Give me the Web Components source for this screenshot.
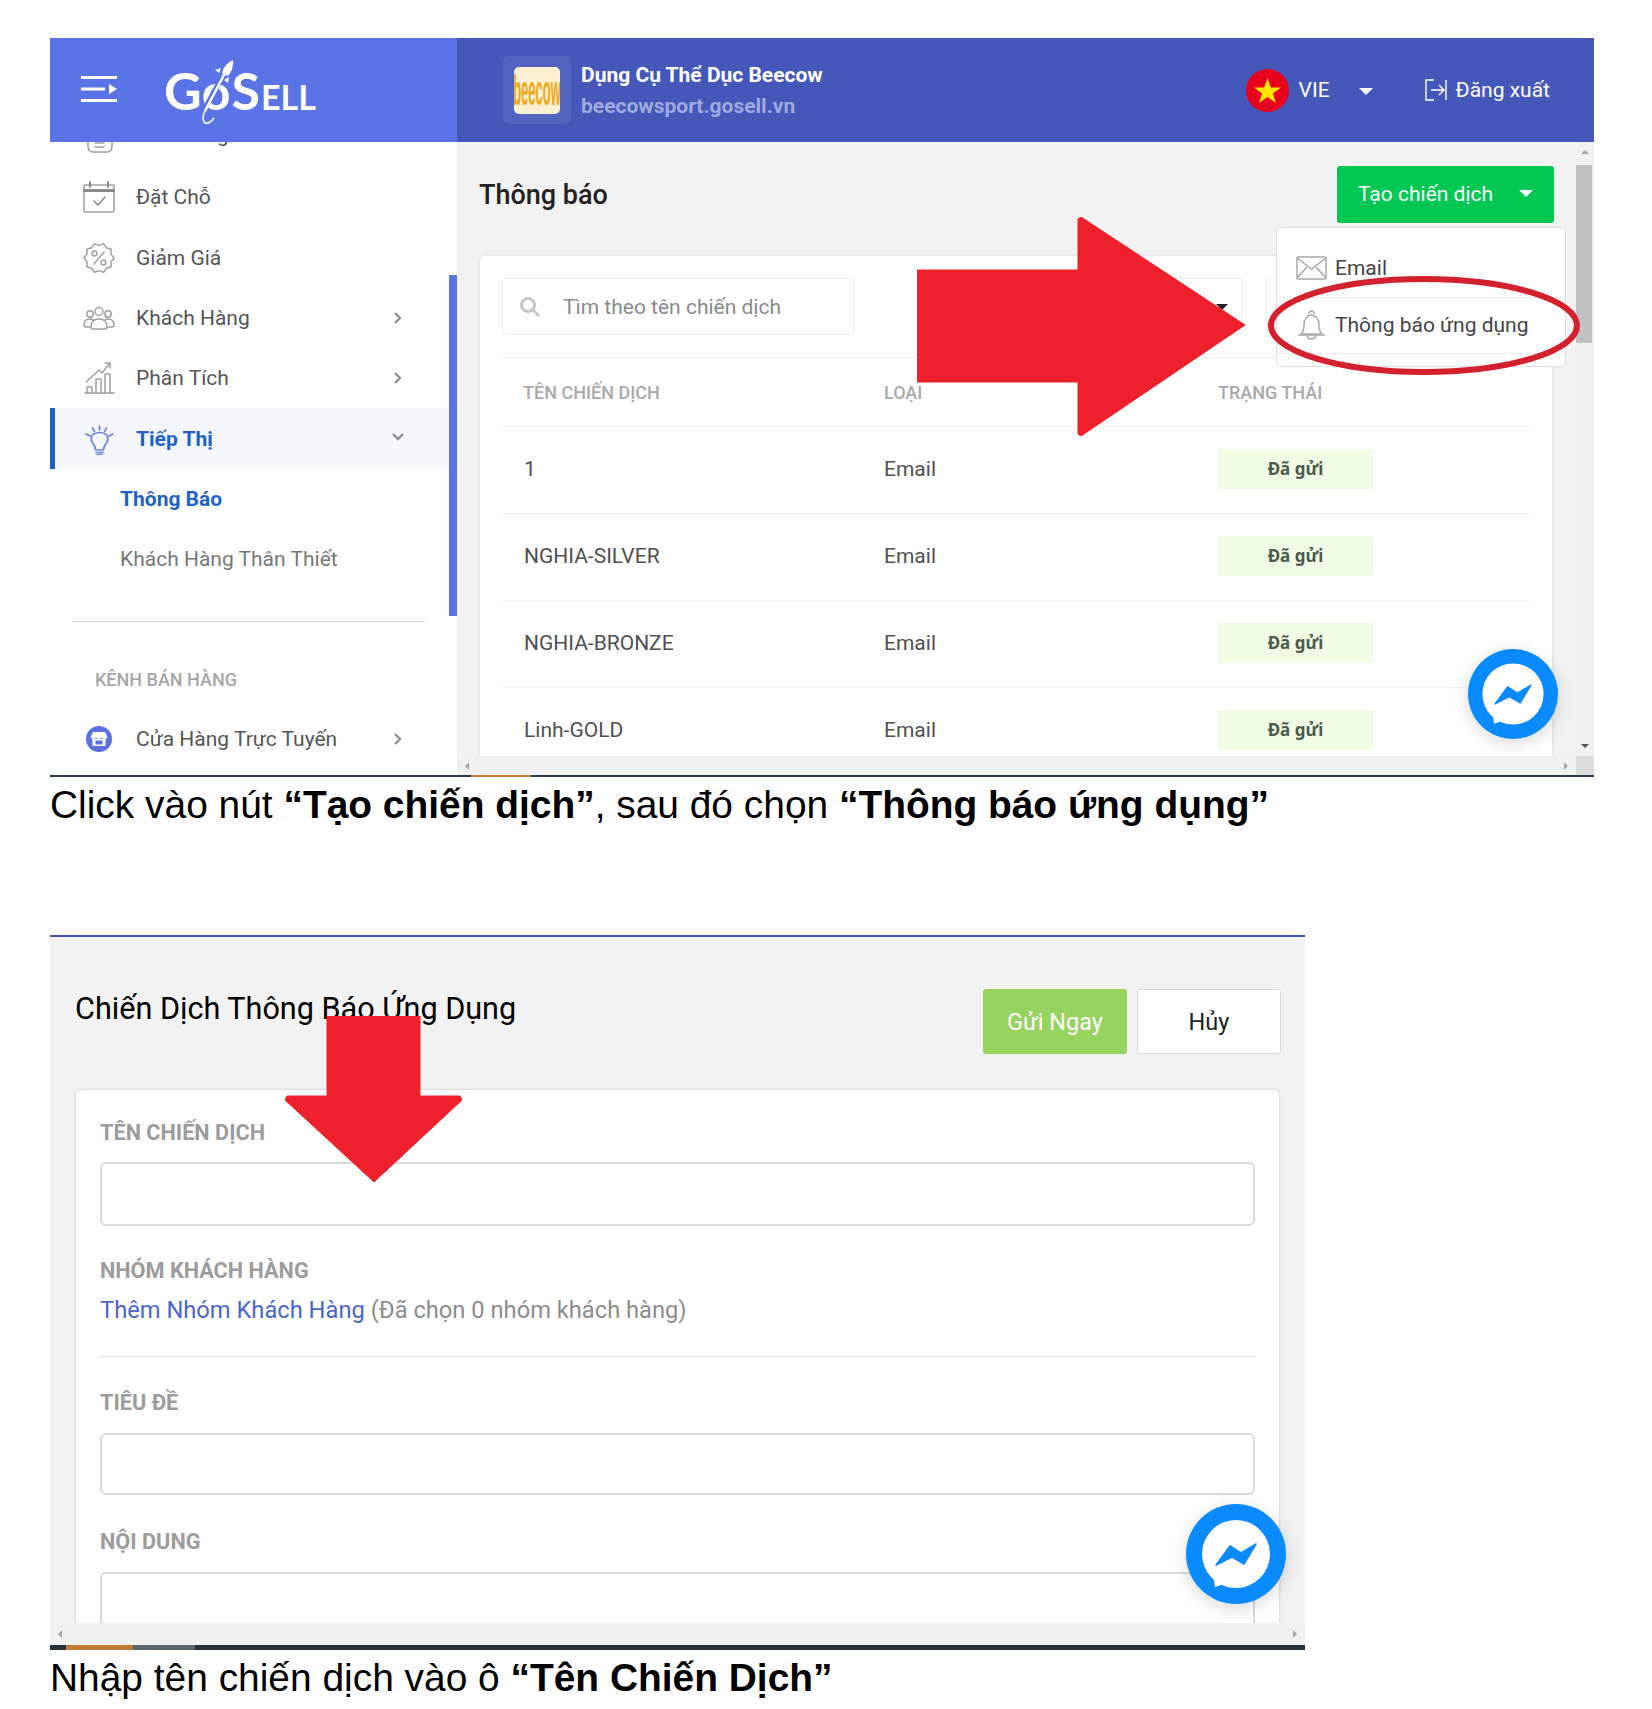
<!DOCTYPE html>
<html lang="vi">
<head>
<meta charset="utf-8">
<title>Thông báo ứng dụng</title>
<style>
  html, body { margin: 0; background: #fff; }
</style>
</head>
<body>
<guide-page>
  <notify-shot></notify-shot>
  <guide-caption>Click vào nút <b>“Tạo chiến dịch”</b>, sau đó chọn <b>“Thông báo ứng dụng”</b></guide-caption>
  <campaign-shot></campaign-shot>
  <guide-caption>Nhập tên chiến dịch vào ô <b>“Tên Chiến Dịch”</b></guide-caption>
</guide-page>

<script>
// nav icons, drawn on a 32x32 box
const stroke = 'fill="none" stroke="#a0a0a0" stroke-width="1.5" stroke-linecap="round" stroke-linejoin="round"';

function scallop() {
  let pts = [];
  for (let i = 0; i < 20; i++) {
    const r = i % 2 ? 12.6 : 15;
    const a = (i * Math.PI) / 10;
    pts.push((16 + r * Math.cos(a)).toFixed(1) + "," + (16 + r * Math.sin(a)).toFixed(1));
  }
  return pts.join(" ");
}

const ICONS = {
  box: `<g ${stroke}><path d="M5 21v4q0 6 5 6h14q5 0 5-6v-4"/><path d="M12 26h9M12 22h9"/></g>`,
  calendar: `<g ${stroke}><rect x="1" y="4" width="30" height="27" rx="1"/><path d="M1 9.500h30" stroke="#8a8a8a" stroke-width="3"/><path d="M7 1v5M25 1v5" stroke="#8a8a8a" stroke-width="2"/><path d="M11 20l4 4 7-8" stroke="#8a8a8a" stroke-width="1.6"/></g>`,
  percent: `<g ${stroke}><polygon points="${scallop()}"/><path d="M11 22L21 10"/><circle cx="11.5" cy="11.5" r="2.4"/><circle cx="20.5" cy="20.5" r="2.4"/></g>`,
  people: `<g ${stroke}><circle cx="16" cy="9.5" r="4"/><circle cx="7" cy="12" r="3.2"/><circle cx="25" cy="12" r="3.2"/><path d="M8 25q0-8 8-8t8 8q0 2-2 2H10q-2 0-2-2z"/><path d="M7 25H3q-2 0-2-2 0-6 6-6 2 0 3 1M25 25h4q2 0 2-2 0-6-6-6-2 0-3 1"/></g>`,
  chart: `<g ${stroke}><path d="M2 31h29"/><path d="M4 31v-6h5v6M13 31V17h5v14M22 31V12h5v19"/><path d="M3 20L16 8l3 3 7-9M22 1h5v5" /></g>`,
  bulb: `<g fill="none" stroke="#6d84dc" stroke-width="1.7" stroke-linecap="round" stroke-linejoin="round"><path d="M12.500 27q0-4-3-7-3-5 1-9 6-3 12 0 4 4 1 9-3 3-3 7z"/><path d="M13 29.500h7M14 31.500h5"/><path d="M16.500 3v4M9.500 5l2 3.500M23.500 5l-2 3.500M3 11l4 2M30 11l-4 2"/></g>`,
  store: `<circle cx="16" cy="16" r="13" fill="#5a6fe0"/><path d="M10 9h12l2.500 5q-1 2-3 2t-2.500-1.500q-1 1.500-3 1.500t-3-1.500q-.5 1.500-2.500 1.500t-3-2z" fill="#fff"/><rect x="9.500" y="16" width="13" height="7" fill="#fff"/><rect x="12.500" y="17.500" width="7" height="4" fill="#5a6fe0"/>`
};

class Base extends HTMLElement {
  connectedCallback() {
    if (this.shadowRoot) return;
    this.attachShadow({ mode: "open" });
    this.shadowRoot.innerHTML = this.markup();
  }
}

class GuidePage extends Base {
  markup() {
    return `<style>
      :host { display: block; padding: 38px 0 0 50px; height: 1671px; overflow: hidden; }
    </style><slot></slot>`;
  }
}

class GuideCaption extends Base {
  markup() {
    return `<style>
      :host { display: block; font: 400 38.9px/56px "Liberation Sans", Arial, sans-serif; color: #000; white-space: nowrap; }
      :host(:nth-of-type(1)) { margin-bottom: 102px; }
    </style><slot></slot>`;
  }
}

// scrollbar strip, vertical or horizontal
class ScrollBar extends Base {
  markup() {
    const v = this.hasAttribute("vertical");
    return `<style>
      :host { display: flex; background: #f1f1f1; position: relative; flex-direction: ${v ? "column" : "row"}; align-items: center; justify-content: space-between; padding: ${v ? "8px 0" : "0 8px"}; box-sizing: border-box; }
      i { width: 0; height: 0; border: 4.5px solid transparent; }
      .a { ${v ? "border-bottom-color: #a8a8a8; border-top-width: 0" : "border-right-color: #a8a8a8; border-left-width: 0"} }
      .b { ${v ? "border-top-color: #505050; border-bottom-width: 0" : "border-left-color: #a8a8a8; border-right-width: 0"} }
      .thumb { position: absolute; background: #c1c1c1; ${this.getAttribute("thumb") || "display:none"} }
    </style><i class="a"></i><div class="thumb"></div><i class="b"></i>`;
  }
}

class TopBar extends Base {
  markup() {
    return `<style>
      :host { display: flex; height: 104px; color: #fff; font-family: Roboto, sans-serif; }
      .brand { width: 407px; background: #5a73e6; display: flex; align-items: center; box-sizing: border-box; padding-left: 31px; }
      .burger { width: 36px; height: 26px; margin-top: -2px; }
      .logo { position: relative; display: flex; align-items: baseline; margin: 0 0 0 47px; font: 700 52px/1 Lato, sans-serif; }
      .logo small { font-size: 34px; margin-left: 1px; }
      .logo svg { position: absolute; left: 37px; top: -4px; }
      .logo .o { font-size: 50px; margin: 0 1px 0 0; }
      .store { flex: 1; background: #4557b8; display: flex; align-items: center; padding: 0 44px 0 46px; }
      .thumb { width: 68px; height: 68px; border-radius: 5px; background: #5263c0; display: flex; align-items: center; justify-content: center; }
      .beecow { width: 46px; height: 47px; border-radius: 5px; overflow: hidden; background: #fdf1d2; display: flex; align-items: center; justify-content: center; }
      .beecow span { font: 700 13px/1 "Liberation Sans", sans-serif; color: #f2a71b; transform: scale(1, 3.2); }
      .name { margin-left: 10px; padding-top: 1.5px; flex: 1; font-weight: 700; }
      .name div { font-size: 21px; line-height: 30.5px; }
      .name .sub { color: #9fa9e0; }
      .lang { display: flex; align-items: center; font-size: 21px; }
      .flag { width: 43px; height: 43px; margin-right: 10px; }
      .caret { width: 0; height: 0; border: 7.5px solid transparent; border-top-color: #fff; border-bottom-width: 0; margin: 2px 52px 0 29px; }
      .out { display: flex; align-items: center; font-size: 21px; gap: 9px; }
    </style>
    <div class="brand">
      <svg class="burger" viewBox="0 0 36 26"><path d="M0 1.500h36M0 13h24M0 24.500h36" stroke="#fff" stroke-width="3"/><path d="M28 8l8 5-8 5z" fill="#fff"/></svg>
      <div class="logo"><span>G</span><span class="o">o</span><span>S</span><small>ELL</small>
        <svg width="34" height="64" viewBox="0 0 34 64" fill="none"><path d="M3 50L24 12" stroke="#5a73e6" stroke-width="5"/><path d="M4 51L24 13" stroke="#fff" stroke-width="2.500"/><path d="M21 13q2-9 11-13 1 9-5 16z" fill="#fff"/><path d="M20 8l-6 2 4 3zM28 17l-1 6-4-3z" fill="#fff"/><path d="M4 51q-4 8 0 12 5 1 9-5" stroke="#fff" stroke-width="1.500"/></svg>
      </div>
    </div>
    <div class="store">
      <div class="thumb"><div class="beecow"><span>beecow</span></div></div>
      <div class="name"><div>Dụng Cụ Thể Dục Beecow</div><div class="sub">beecowsport.gosell.vn</div></div>
      <div class="lang">
        <svg class="flag" viewBox="0 0 43 43"><circle cx="21.500" cy="21.500" r="21.500" fill="#e8001c"/><polygon points="21.500,9 25,18.500 35,18.500 27,24.500 30,34 21.500,28 13,34 16,24.500 8,18.500 18,18.500" fill="#ffe600"/></svg>
        VIE<span class="caret"></span>
      </div>
      <div class="out">
        <svg width="22" height="22" viewBox="0 0 22 22" fill="none" stroke="#fff" stroke-width="1.400"><path d="M9 1H1v20h8M21 1v20M6 11h13M14 6l5 5-5 5"/></svg>
        Đăng xuất
      </div>
    </div>`;
  }
}

class NavItem extends Base {
  markup() {
    const icon = this.getAttribute("icon");
    const chev = this.getAttribute("chevron");
    const down = chev === "down";
    return `<style>
      :host { display: flex; align-items: center; height: 60.3px; padding-left: 33px; box-sizing: border-box; color: #555; font-size: 21px; position: relative; }
      :host([active]) { background: #f5f7fc; color: #1e62c8; font-weight: 700; margin-right: 8px; box-shadow: inset 5px 0 0 #1e62c8; }
      :host([sub]) { padding-left: 70px; color: #777; }
      :host([current]) { color: #1e62c8; font-weight: 700; }
      svg.i { width: 32px; height: 32px; margin-right: 21px; flex: none; }
      svg.c { position: absolute; left: ${down ? 342 : 344}px; top: 50%; margin-top: -6px; width: 12px; height: 12px; }
    </style>
    ${icon ? `<svg class="i" viewBox="0 0 32 32">${ICONS[icon]}</svg>` : ""}
    <slot></slot>
    ${chev ? `<svg class="c" viewBox="0 0 12 12" fill="none" stroke="#8f8f8f" stroke-width="2.4"><path d="${down ? "M1 1l5 5 5-5" : "M1 1l5 5-5 5"}"/></svg>` : ""}`;
  }
}

class SideNav extends Base {
  markup() {
    return `<style>
      :host { display: block; width: 407px; flex: none; background: #fff; overflow: hidden; position: relative; font-family: Roboto, sans-serif; }
      .list { margin-top: -35px; }
      hr { border: 0; border-top: 1.5px solid #d8d8d8; margin: 32px 32px 0 22px; }
      h4 { margin: 46px 0 0 45px; font: 500 18px/24px Roboto, sans-serif; color: #a6a6a6; height: 24px; }
      .bar { position: absolute; right: 0; top: 133px; width: 8px; height: 341px; background: #5a73e6; }
      .last { margin-top: 16px; }
      .clip { margin-top: -5px; }
    </style>
    <div class="list">
      <nav-item icon="box"><span class="clip">Đơn Hàng</span></nav-item>
      <nav-item icon="calendar">Đặt Chỗ</nav-item>
      <nav-item icon="percent">Giảm Giá</nav-item>
      <nav-item icon="people" chevron="right">Khách Hàng</nav-item>
      <nav-item icon="chart" chevron="right">Phân Tích</nav-item>
      <nav-item icon="bulb" chevron="down" active>Tiếp Thị</nav-item>
      <nav-item sub current>Thông Báo</nav-item>
      <nav-item sub>Khách Hàng Thân Thiết</nav-item>
      <hr>
      <h4>KÊNH BÁN HÀNG</h4>
      <nav-item class="last" icon="store" chevron="right">Cửa Hàng Trực Tuyến</nav-item>
    </div>
    <div class="bar"></div>`;
  }
}

class StatusBadge extends Base {
  markup() {
    return `<style>
      :host { display: flex; width: 155px; height: 40px; background: #f1fce4; color: #4d5a4d; font: 700 17px/40px "Noto Sans", Roboto, sans-serif; justify-content: center; border-radius: 2px; }
    </style><slot></slot>`;
  }
}

class CampaignRow extends Base {
  markup() {
    const head = this.hasAttribute("head");
    return `<style>
      :host { display: grid; grid-template-columns: 382px 334px 1fr; align-items: center; height: ${head ? 69 : 87}px; padding: ${head ? "2px 0 0" : "0 0 2px"}; border-bottom: 1px solid #f1f1f4; box-sizing: border-box; font: ${head ? "500 18px" : "400 21px"}/1 Roboto, sans-serif; color: ${head ? "#a9a9a9" : "#4f4f4f"}; }
      div:first-of-type { padding-left: ${head ? 21 : 22}px; }
    </style>
    <div>${this.getAttribute("name")}</div><div>${this.getAttribute("kind")}</div>
    <div>${head ? "TRẠNG THÁI" : "<status-badge>Đã gửi</status-badge>"}</div>`;
  }
}

class MessengerFab extends Base {
  markup() {
    return `<style>
      :host { display: block; position: absolute; border-radius: 50%; box-shadow: 0 4px 18px rgba(0,0,0,.16); }
      svg { display: block; width: 100%; height: 100%; }
    </style>
    <svg viewBox="0 0 100 100">
      <circle cx="50" cy="50" r="50" fill="#0a8aff"/>
      <circle cx="50" cy="50" r="34" fill="#fff"/>
      <path d="M27 70l2 13 12-4z" fill="#fff"/>
      <path d="M30 61L44 42l11 7 15-9-12 20-12-7z" fill="#0a8aff" stroke="#0a8aff" stroke-width="1.500" stroke-linejoin="round"/>
    </svg>`;
  }
}

// red annotation arrow, svg over the shot
class RedArrow extends Base {
  markup() {
    const down = this.getAttribute("dir") === "down";
    const w = down ? 177 : 328, h = down ? 166 : 219;
    const pts = down
      ? "42,0 135,0 135,80 175,80 177,84 89,166 0,84 2,80 42,80"
      : "0,53 161,53 161,2 164,0 328,108 164,219 161,217 161,165 0,165";
    return `<style>
      :host { display: block; position: absolute; width: ${w}px; height: ${h}px; }
      svg { display: block; }
    </style><svg width="${w}" height="${h}" viewBox="0 0 ${w} ${h}"><polygon points="${pts}" fill="#ee202b" stroke="#ee202b" stroke-width="1" stroke-linejoin="round"/></svg>`;
  }
}

class NotifyShot extends Base {
  markup() {
    return `<style>
      :host { display: block; width: 1544px; height: 739px; position: relative; font-family: Roboto, sans-serif; }
      .body { display: flex; height: 633px; }
      .main { flex: 1; background: #f2f2f2; display: grid; grid-template: 1fr 19px / 1fr 18px; position: relative; min-width: 0; }
      .content { padding: 24px 24px 0 23px; overflow: hidden; min-height: 0; }
      .head { display: flex; justify-content: space-between; align-items: center; height: 57px; margin-bottom: 33px; }
      h2 { margin: 1px 0 0 -1px; font: 500 27px/1 Roboto, sans-serif; color: #222; }
      .btn { width: 217px; height: 57px; margin-right: -2px; padding: 0 0 2px 21px; border-radius: 3px; background: #00c853; color: #fff; font-size: 21px; display: flex; align-items: center; box-sizing: border-box; }
      .btn i { width: 0; height: 0; border: 7px solid transparent; border-top-color: #fff; border-bottom-width: 0; margin-left: 26px; }
      .card { background: #fff; height: 800px; padding: 22px 22px 0; border-radius: 4px; box-shadow: 0 0 4px rgba(0,0,0,.1); }
      .tools { display: flex; padding-bottom: 22px; border-bottom: 1.5px solid #f1f1f1; }
      .tools > div { height: 57px; box-sizing: border-box; border: 1.5px solid #eee; border-radius: 4px; }
      .search { width: 352px; display: flex; align-items: center; color: #8a8a8a; font-size: 21px; padding-left: 16px; }
      .search svg { margin-right: 22px; }
      .sel { width: 290px; margin-left: 99px; display: flex; align-items: center; justify-content: flex-end; padding-right: 14px; }
      .sel i { width: 0; height: 0; border: 6px solid transparent; border-top-color: #222; border-bottom-width: 0; }
      .sel2 { width: 264px; margin-left: 23px; }
      .vbar { grid-column: 2; grid-row: 1; }
      .hbar { grid-column: 1; grid-row: 2; }
      .corner { background: #dcdcdc; }
      .menu { position: absolute; left: 819px; top: 85px; width: 290px; height: 140px; box-sizing: border-box; padding: 11px 0; background: #fff; border: 1.5px solid #e0e0e0; border-radius: 5px; font-size: 21px; color: #444; }
      .menu div { height: 57.5px; display: flex; align-items: center; padding-left: 19px; gap: 8px; box-sizing: border-box; }
      .menu div + div { border-top: 1.5px solid #eee; border-bottom: 1.5px solid #eee; }
      .line { position: absolute; left: 0; bottom: 0; width: 100%; height: 2px; background: #2e3a52; }
      .line b { display: block; width: 60px; height: 2px; margin-left: 421px; background: #c97f3b; }
      .ring { position: absolute; left: 1218px; top: 238px; }
    </style>
    <top-bar></top-bar>
    <div class="body">
      <side-nav></side-nav>
      <div class="main">
        <div class="content">
          <div class="head"><h2>Thông báo</h2><div class="btn">Tạo chiến dịch<i></i></div></div>
          <div class="card">
            <div class="tools">
              <div class="search"><svg width="22" height="22" viewBox="0 0 22 22" fill="none" stroke="#c6c6cc" stroke-width="3"><circle cx="9" cy="9" r="6.500"/><path d="M14 14l6 6"/></svg>Tìm theo tên chiến dịch</div>
              <div class="sel"><i></i></div>
              <div class="sel2"></div>
            </div>
            <campaign-row head name="TÊN CHIẾN DỊCH" kind="LOẠI"></campaign-row>
            <campaign-row name="1" kind="Email"></campaign-row>
            <campaign-row name="NGHIA-SILVER" kind="Email"></campaign-row>
            <campaign-row name="NGHIA-BRONZE" kind="Email"></campaign-row>
            <campaign-row name="Linh-GOLD" kind="Email"></campaign-row>
          </div>
        </div>
        <scroll-bar class="vbar" vertical thumb="left:0;top:23px;width:16px;height:178px"></scroll-bar>
        <scroll-bar class="hbar"></scroll-bar>
        <div class="corner"></div>
        <div class="menu">
          <div><svg width="31" height="24" viewBox="0 0 31 24" fill="none" stroke="#a9a9a9" stroke-width="1.500"><rect x="1" y="1" width="29" height="22" rx="1"/><path d="M1 2l14.500 11L30 2M1 22l10-11M30 22L20 11"/></svg>Email</div>
          <div><svg width="31" height="30" viewBox="0 0 31 30" fill="none" stroke="#a9a9a9" stroke-width="1.500" stroke-linejoin="round"><path d="M5 24q3-3 3-9 0-9 7.500-10 7.500 1 7.500 10 0 6 3 9z"/><path d="M2 25h27M13 4q0-3 2.500-3T18 4M11 26q1 3 4.500 3t4.500-3"/></svg>Thông báo ứng dụng</div>
        </div>
        <messenger-fab style="left:1011px;top:507px;width:90px;height:90px"></messenger-fab>
      </div>
    </div>
    <div class="line"><b></b></div>
    <red-arrow dir="right" style="left:867px;top:179px"></red-arrow>
    <svg class="ring" width="312" height="99" viewBox="0 0 312 99"><ellipse cx="156" cy="49.500" rx="153" ry="46.500" fill="none" stroke="#d2202c" stroke-width="6"/></svg>`;
  }
}

class FormField extends Base {
  markup() {
    return `<style>
      :host { display: block; }
      label { display: block; padding-top: 2px; font: 700 21.7px/22px Roboto, sans-serif; color: #9c9c9c; }
      div { margin-top: ${this.getAttribute("gap") || 19}px; height: ${this.getAttribute("height") || 64}px; box-sizing: border-box; background: #fff; border: 2px solid #dadade; border-radius: 6px; }
    </style><label>${this.getAttribute("label")}</label><div></div>`;
  }
}

class CampaignShot extends Base {
  markup() {
    return `<style>
      :host { display: block; width: 1255px; height: 715px; position: relative; overflow: hidden; background: #f2f2f2; border-top: 2px solid #4557b0; box-sizing: border-box; font-family: Roboto, sans-serif; }
      .wrap { height: 686px; padding: 52px 26px 0 26px; box-sizing: border-box; overflow: hidden; }
      .head { display: flex; justify-content: space-between; height: 65px; margin-bottom: 36px; }
      h2 { margin: 0 0 0 -1px; font: 400 30.6px/40px Roboto, sans-serif; color: #000; }
      .acts { display: flex; gap: 10px; margin-right: -2px; }
      .acts div { width: 144px; border-radius: 3px; display: flex; align-items: center; justify-content: center; font-size: 23.500px; box-sizing: border-box; }
      .send { background: #96d35f; color: #fff; }
      .cancel { background: #fff; color: #222; border: 1.5px solid #dcdcdc; }
      .card { background: #fff; padding: 30px 24px 0; height: 700px; border-radius: 5px; box-shadow: 0 0 3px rgba(0,0,0,.2); }
      .group { margin-top: 32px; }
      .group p { margin: 13px 0 0; font: 400 23.700px/30px Roboto, sans-serif; color: #8c8c8c; }
      .group a { color: #4a66cc; }
      .group label { display: block; padding-top: 2px; font: 700 21.7px/22px Roboto, sans-serif; color: #9c9c9c; }
      hr { border: 0; border-top: 1.5px solid #e6e6e6; margin: 31px 0 33px; }
      form-field + form-field { margin-top: 34px; }
      scroll-bar { height: 22px; }
      .dark { height: 5px; background: #26333d; display: flex; }
      .dark i { display: block; height: 5px; }
    </style>
    <div class="wrap">
      <div class="head"><h2>Chiến Dịch Thông Báo Ứng Dụng</h2>
        <div class="acts"><div class="send">Gửi Ngay</div><div class="cancel">Hủy</div></div></div>
      <div class="card">
        <form-field label="TÊN CHIẾN DỊCH" gap="18"></form-field>
        <div class="group">
          <label>NHÓM KHÁCH HÀNG</label>
          <p><a>Thêm Nhóm Khách Hàng</a> (Đã chọn 0 nhóm khách hàng)</p>
        </div>
        <hr>
        <form-field label="TIÊU ĐỀ" height="62"></form-field>
        <form-field label="NỘI DUNG" height="300"></form-field>
      </div>
    </div>
    <scroll-bar></scroll-bar>
    <div class="dark"><i style="width:16px"></i><i style="width:67px;background:#c07a34"></i><i style="width:62px;background:#5b666e"></i></div>
    <red-arrow dir="down" style="left:235px;top:79px"></red-arrow>
    <messenger-fab style="left:1136px;top:567px;width:100px;height:100px"></messenger-fab>`;
  }
}

customElements.define("guide-page", GuidePage);
customElements.define("guide-caption", GuideCaption);
customElements.define("scroll-bar", ScrollBar);
customElements.define("top-bar", TopBar);
customElements.define("nav-item", NavItem);
customElements.define("side-nav", SideNav);
customElements.define("status-badge", StatusBadge);
customElements.define("campaign-row", CampaignRow);
customElements.define("messenger-fab", MessengerFab);
customElements.define("red-arrow", RedArrow);
customElements.define("notify-shot", NotifyShot);
customElements.define("form-field", FormField);
customElements.define("campaign-shot", CampaignShot);
</script>
</body>
</html>
